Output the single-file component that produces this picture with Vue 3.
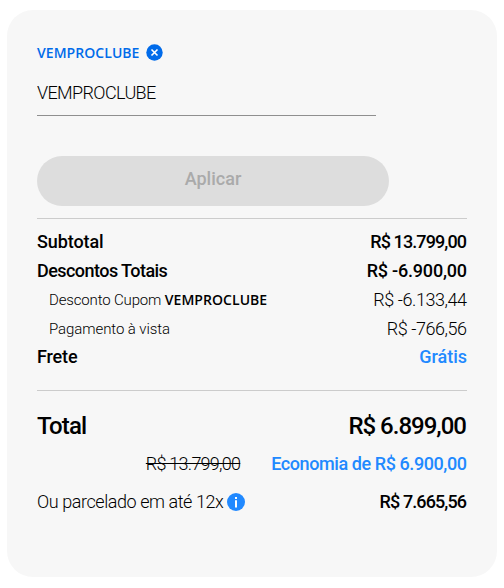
<template>

  <section class="summary">

    <div class="coupon-tag">
      <span class="coupon-name">{{ coupon }}</span>
      <button class="icon-button" aria-label="Remover cupom" @click="coupon = ''">
        <svg width="17" height="17" viewBox="0 0 17 17">
          <circle cx="8.5" cy="8.5" r="8.2" fill="#006bea" />
          <path d="M5.5 5.5l6 6M11.5 5.5l-6 6" stroke="#fff" stroke-width="1.6" />
        </svg>
      </button>
    </div>

    <input v-model="code" class="coupon-input" type="text" spellcheck="false">

    <button class="apply" disabled>Aplicar</button>

    <div class="lines">
      <div
        v-for="line in lines"
        :key="line.id"
        class="line"
        :class="line.id"
      >
        <span class="label">{{ line.label }} <b v-if="line.coupon">{{ line.coupon }}</b></span>
        <span class="value">{{ line.value }}</span>
      </div>
    </div>

    <div class="line total">
      <span class="label">Total</span>
      <span class="value">R$ 6.899,00</span>
    </div>

    <div class="line saving">
      <s class="old-price">R$ 13.799,00</s>
      <span class="value">Economia de R$ 6.900,00</span>
    </div>

    <div class="line installments">
      <span class="label">Ou parcelado em até 12x</span>
      <svg class="info" width="18" height="18" viewBox="0 0 18 18">
        <circle cx="9" cy="9" r="9" fill="#2189ff" />
        <path d="M8 4h2v2H8zM8 7.2h2V14.5H8z" fill="#fff" />
      </svg>
      <span class="value">R$ 7.665,56</span>
    </div>

  </section>

</template>

<script setup>

import { ref } from "vue"

const coupon = ref("VEMPROCLUBE")
const code = ref("VEMPROCLUBE")

const lines = [
  { id: "subtotal", label: "Subtotal", value: "R$ 13.799,00" },
  { id: "discounts", label: "Descontos Totais", value: "R$ -6.900,00" },
  { id: "coupon-discount", label: "Desconto Cupom", coupon: "VEMPROCLUBE", value: "R$ -6.133,44" },
  { id: "cash-discount", label: "Pagamento à vista", value: "R$ -766,56" },
  { id: "shipping", label: "Frete", value: "Grátis" }
]

</script>

<style>

body{
  background:#fff;
}

</style>

<style scoped>

.summary{
  box-sizing:border-box;
  width:490px;
  height:567px;
  margin:10px 7px 0;
  padding:30px 30px 0;
  border-radius:26px;
  background:#f7f7f7;
  color:#000;
  font-family:Roboto, "Noto Sans", sans-serif;
  font-size:18px;
}

button{
  padding:0;
  border:0;
  font:inherit;
}

.coupon-tag{
  display:flex;
  align-items:center;
  gap:7px;
  height:25px;
  color:#006bea;
  font-family:"Open Sans", "Noto Sans", sans-serif;
  font-size:14px;
  font-weight:600;
  letter-spacing:.05px;
}

.icon-button{
  display:flex;
  background:none;
}

.coupon-input{
  display:block;
  box-sizing:border-box;
  width:339px;
  height:46px;
  margin-top:5px;
  padding:0;
  border:0;
  border-bottom:1px solid #8f8f8f;
  background:none;
  color:#000;
  font:inherit;
  font-weight:300;
  letter-spacing:-.62px;
  outline:0;
}

.apply{
  display:block;
  width:352px;
  height:50px;
  margin-top:40px;
  padding-bottom:6px;
  border-radius:25px;
  background:#ddd;
  color:#aaa;
  font-weight:500;
}

.lines{
  height:171px;
  margin-top:12px;
  border-top:1px solid #ccc;
  border-bottom:1px solid #ccc;
}

.lines .line:first-child{
  margin-top:8px;
}

.line{
  --track:0px;
  display:flex;
  align-items:center;
  height:29px;
  line-height:29px;
  font-weight:500;
  white-space:nowrap;
}

/* negative tracking would push the last digit past the edge */
.value{
  margin-left:auto;
  margin-right:calc(var(--track) * -1);
  letter-spacing:var(--track);
}

.subtotal{
  --track:-.9px;
}

.subtotal .label{
  letter-spacing:-.1px;
}

.discounts{
  --track:-.2px;
}

.discounts .label{
  letter-spacing:-.55px;
}

.coupon-discount,
.cash-discount{
  --track:-.45px;
  padding-left:12px;
  font-weight:300;
}

.coupon-discount .label,
.cash-discount .label{
  font-size:15px;
  letter-spacing:-.08px;
}

.coupon-discount .label{
  letter-spacing:-.15px;
}

.cash-discount .label{
  padding-top:1px;
}

.coupon-discount b{
  font-family:"Open Sans", "Noto Sans", sans-serif;
  font-size:14px;
  font-weight:600;
  letter-spacing:.05px;
}

.shipping{
  height:27px;
  line-height:27px;
}

.shipping .label{
  letter-spacing:-.15px;
}

.shipping .value,
.saving .value{
  color:#2189ff;
}

.total{
  --track:-1px;
  height:38px;
  margin-top:16px;
  font-size:24px;
}

.total .label{
  letter-spacing:-.9px;
}

.saving{
  --track:-.42px;
  height:38px;
  margin-top:-1px;
  justify-content:flex-end;
}

.saving .value{
  margin-left:31px;
}

.old-price{
  font-weight:300;
  letter-spacing:-.75px;
}

.installments{
  --track:-.9px;
  height:38px;
}

.installments .label{
  font-weight:300;
  letter-spacing:-.43px;
}

.info{
  margin:2px 0 0 4px;
}

</style>
